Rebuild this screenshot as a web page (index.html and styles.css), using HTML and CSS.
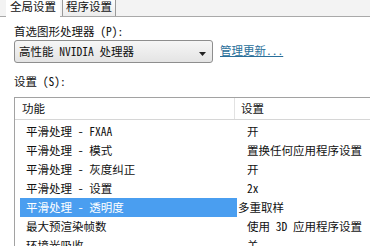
FILE: index.html
```html
<!DOCTYPE html>
<html>
<head>
    <meta charset="UTF-8">
    <link rel="stylesheet" href="styles.css">
</head>
<body>
    <div class="tabs">
        <div class="tab active">全局设置</div>
        <div class="tab">程序设置</div>
    </div>

    <div class="panel">
        <div class="label first">首选图形处理器 (P):</div>
        <div class="gpu_row">
            <div class="select">
                <span>高性能 NVIDIA 处理器</span>
                <svg class="arrow" width="7" height="4" viewBox="0 0 7 4"><path d="M0 0h7L3.5 4z" fill="#222"/></svg>
            </div>
            <a class="link" href="#">管理更新...</a>
        </div>

        <div class="label second">设置 (S):</div>
        <div class="list">
            <div class="head">
                <div class="c1">功能</div>
                <div class="c2">设置</div>
            </div>
            <div class="row"><div class="c1">平滑处理 - FXAA</div><div class="c2">开</div></div>
            <div class="row"><div class="c1">平滑处理 - 模式</div><div class="c2">置换任何应用程序设置</div></div>
            <div class="row"><div class="c1">平滑处理 - 灰度纠正</div><div class="c2">开</div></div>
            <div class="row"><div class="c1">平滑处理 - 设置</div><div class="c2">2x</div></div>
            <div class="row selected"><div class="c1">平滑处理 - 透明度</div><div class="c2">多重取样</div></div>
            <div class="row"><div class="c1">最大预渲染帧数</div><div class="c2">使用 3D 应用程序设置</div></div>
            <div class="row"><div class="c1">环境光吸收</div><div class="c2">关</div></div>
        </div>
    </div>
</body>
</html>
```

FILE: styles.css
```css
body {
    margin: 0;
    background: #fff;
    color: #111;
    font-family: "Noto Sans Mono CJK SC", "Noto Sans CJK SC", "DejaVu Sans", sans-serif;
    font-size: 11.5px;
    overflow: hidden;
}

.tabs {
    display: flex;
    height: 16px;
    padding-left: 6px;
    background: #f3f3f3;
    border-bottom: 1px solid #a9a9a9;
}

.tab {
    line-height: 12px;
    padding: 0 4px;
    height: 16px;
}

.tab.active {
    background: #fff;
    height: 17px;
}

.tab + .tab {
    margin-left: 2px;
    padding: 0 3px;
    border-left: 1px solid #9a9a9a;
    border-right: 1px solid #9a9a9a;
    background: linear-gradient(#fdfdfd, #ececec);
}

.panel {
    padding-left: 14px;
}

.label {
    line-height: 14px;
}

.label.first {
    margin-top: 7px;
}

.label.second {
    margin-top: 11px;
}

.gpu_row {
    display: flex;
    align-items: center;
    margin-top: 2px;
}

.select {
    box-sizing: border-box;
    width: 199px;
    height: 23px;
    display: flex;
    align-items: center;
    justify-content: space-between;
    padding: 0 4px 0 4px;
    border: 1px solid #8e8e8e;
    border-radius: 3px;
    background: linear-gradient(#f6f6f6, #e4e4e4);
}

.select span {
    margin-top: -2px;
}

.arrow {
    margin-top: 4px;
    margin-right: 2px;
}

.link {
    margin-left: 7px;
    margin-top: -4px;
    color: #2a6f9a;
    text-decoration: underline;
}

.list {
    margin-top: 9px;
    width: 420px;
    height: 200px;
    border: 1px solid #a2a2a2;
    border-right: none;
}

.head {
    display: flex;
    height: 21px;
    line-height: 21px;
    border-bottom: 1px solid #d6d6d6;
    margin-bottom: 2px;
}

.head .c1 {
    width: 212px;
    padding-left: 7px;
    border-right: 1px solid #e2e2e2;
}

.head .c2 {
    padding-left: 6px;
}

.row {
    display: flex;
    height: 19px;
    line-height: 19px;
}

.row .c1 {
    width: 211px;
    margin-left: 5px;
    padding-left: 6px;
}

.row .c2 {
    padding-left: 10px;
}

.row.selected .c1 {
    background: #4a9ef0;
    color: #fff;
}

.row.selected .c2 {
    padding-left: 1px;
}
```
